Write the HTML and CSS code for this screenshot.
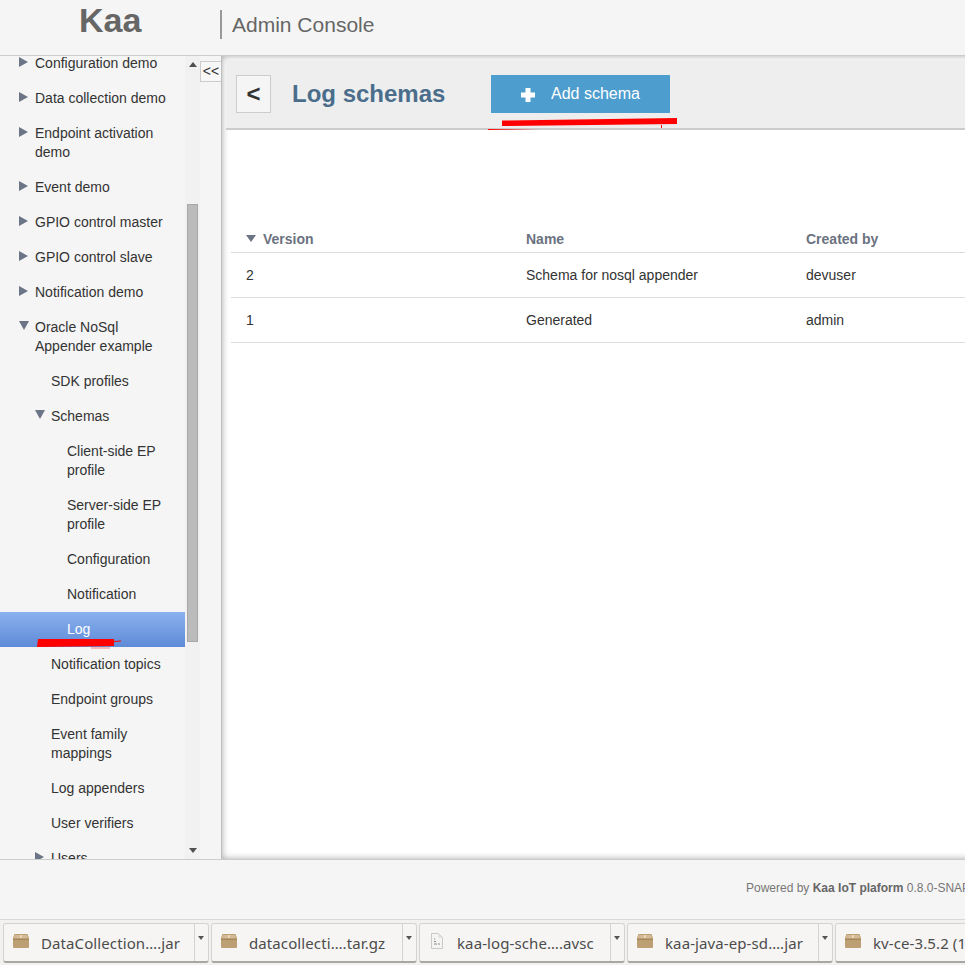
FILE: index.html
```html
<!DOCTYPE html>
<html lang="en">
<head>
    <meta charset="UTF-8">
    <meta name="viewport" content="width=device-width, initial-scale=1.0">
    <title>Kaa Admin Console</title>
    <link rel="stylesheet" href="styles.css">
</head>
<body>

<div class="page">
    <header class="header">
        <div class="logo">Kaa</div>
        <div class="console-title">Admin Console</div>
    </header>

    <div class="middle">
        <nav class="sidebar">
            <div class="tree">
                <div class="node lvl1 closed">Configuration demo</div>
                <div class="node lvl1 closed">Data collection demo</div>
                <div class="node lvl1 closed">Endpoint activation demo</div>
                <div class="node lvl1 closed">Event demo</div>
                <div class="node lvl1 closed">GPIO control master</div>
                <div class="node lvl1 closed">GPIO control slave</div>
                <div class="node lvl1 closed">Notification demo</div>
                <div class="node lvl1 open">Oracle NoSql Appender example</div>
                <div class="node lvl2">SDK profiles</div>
                <div class="node lvl2 open">Schemas</div>
                <div class="node lvl3">Client-side EP profile</div>
                <div class="node lvl3">Server-side EP profile</div>
                <div class="node lvl3">Configuration</div>
                <div class="node lvl3">Notification</div>
                <div class="node lvl3 selected">Log</div>
                <div class="node lvl2">Notification topics</div>
                <div class="node lvl2">Endpoint groups</div>
                <div class="node lvl2">Event family mappings</div>
                <div class="node lvl2">Log appenders</div>
                <div class="node lvl2">User verifiers</div>
                <div class="node lvl2 closed">Users</div>
            </div>
            <div class="scrollbar">
                <div class="scroll-up"></div>
                <div class="scroll-thumb"></div>
                <div class="scroll-down"></div>
            </div>
            <div class="collapse-col">
                <div class="collapse-btn">&lt;&lt;</div>
            </div>
        </nav>

        <main class="content">
            <div class="topbar">
                <div class="back-btn">&lt;</div>
                <h1 class="page-title">Log schemas</h1>
                <div class="add-btn">
                    <svg class="plus" width="14" height="14" viewBox="0 0 14 14"><path d="M4.500 0h5v4.500H14v5H9.500V14h-5V9.500H0v-5h4.500z" fill="#fff"/></svg>
                    <span>Add schema</span>
                </div>
            </div>

            <div class="table">
                <div class="row head">
                    <div class="cell"><span class="sort-arrow"></span>Version</div>
                    <div class="cell">Name</div>
                    <div class="cell">Created by</div>
                </div>
                <div class="row">
                    <div class="cell">2</div>
                    <div class="cell">Schema for nosql appender</div>
                    <div class="cell">devuser</div>
                </div>
                <div class="row">
                    <div class="cell">1</div>
                    <div class="cell">Generated</div>
                    <div class="cell">admin</div>
                </div>
            </div>
        </main>
    </div>

    <footer class="footer">
        <span>Powered by <b>Kaa IoT plaform</b> 0.8.0-SNAPSHOT</span>
    </footer>

    <div class="downloads">
        <div class="dl">
            <div class="dl-main"><svg class="pkg" width="16" height="14" viewBox="0 0 16 14"><use href="#box"/></svg><span>DataCollection….jar</span></div>
            <div class="dl-menu"></div>
        </div>
        <div class="dl">
            <div class="dl-main"><svg class="pkg" width="16" height="14" viewBox="0 0 16 14"><use href="#box"/></svg><span>datacollecti….tar.gz</span></div>
            <div class="dl-menu"></div>
        </div>
        <div class="dl">
            <div class="dl-main">
                <svg class="pkg" width="16" height="16" viewBox="0 0 16 16"><path d="M2.500.5h7l4 4v11h-11z" fill="#f4f4f2" stroke="#c9c9c6"/><path d="M9.500 .5v4h4z" fill="#dcdcd9"/><path d="M5 6h1M5 8.500h2M5 11h3M9 11h2" stroke="#8a8a88"/></svg>
                <span>kaa-log-sche….avsc</span>
            </div>
            <div class="dl-menu"></div>
        </div>
        <div class="dl">
            <div class="dl-main"><svg class="pkg" width="16" height="14" viewBox="0 0 16 14"><use href="#box"/></svg><span>kaa-java-ep-sd….jar</span></div>
            <div class="dl-menu"></div>
        </div>
        <div class="dl">
            <div class="dl-main"><svg class="pkg" width="16" height="14" viewBox="0 0 16 14"><use href="#box"/></svg><span>kv-ce-3.5.2 (1).tar.gz</span></div>
            <div class="dl-menu"></div>
        </div>
    </div>

    <!-- hand drawn red marks on top of the screen -->
    <svg class="marks" width="965" height="965" viewBox="0 0 965 965">
        <defs>
            <linearGradient id="fade">
                <stop offset="0" stop-color="#f00"/>
                <stop offset="1" stop-color="#f00" stop-opacity="0"/>
            </linearGradient>
        </defs>
        <path d="M502 120.500L677 118v6L502 126z" fill="#f00"/>
        <rect x="488" y="129" width="52" height="1" fill="url(#fade)"/>
        <path d="M661 125h1v3h-1z" fill="#f00"/>
        <path d="M38 639h76v2l7 -.500v1l-7 .500v4l-77 1z" fill="#f00"/>
        <path d="M91 647.500h19v1h-19z" fill="#f00" opacity=".5"/>
    </svg>
</div>

<svg class="defs" width="0" height="0">
    <defs>
        <g id="box">
            <path d="M1.500 0h13L16 4v9a1 1 0 0 1-1 1H1a1 1 0 0 1-1-1V4z" fill="#bd9f74"/>
            <path d="M0 5h16v1H0z" fill="#a5875e"/>
            <path d="M2 1h12l1 3H1z" fill="#d3bb97"/>
            <path d="M7 1h2v3H7z" fill="#e6d7bf"/>
        </g>
    </defs>
</svg>

</body>
</html>
```

FILE: styles.css
```css
html, body {
    margin: 0;
    padding: 0;
    overflow: hidden;
}
body {
    font-family: "Liberation Sans", Arial, sans-serif;
    font-size: 14px;
    color: #333;
    background-color: #f5f5f5;
}
.page {
    position: relative;
    display: flex;
    flex-direction: column;
    width: 965px;
    height: 965px;
    overflow: hidden;
}

/* header */
.header {
    display: flex;
    flex: 0 0 56px;
    box-sizing: border-box;
    border-bottom: 1px solid #ccc;
    background-color: #f5f5f5;
    color: #666;
}
.logo {
    width: 220px;
    padding: 0 0 0 79px;
    box-sizing: border-box;
    font-size: 34px;
    font-weight: bold;
    line-height: 40px;
}
.console-title {
    height: 29px;
    margin-top: 10px;
    padding-left: 10px;
    border-left: 2px solid #999;
    font-size: 21px;
    line-height: 30px;
}

/* middle part */
.middle {
    display: flex;
    flex: 1;
    min-height: 0;
}
.sidebar {
    display: flex;
    flex: 0 0 221px;
    overflow: hidden;
}
.tree {
    flex: 0 0 185px;
    height: 100%;
    overflow: hidden;
    background-color: #f5f5f5;
}
.node {
    position: relative;
    padding-top: 8px;
    padding-bottom: 8px;
    padding-right: 8px;
    line-height: 19px;
}
.node:first-child {
    margin-top: -10px;
}
.lvl1 { padding-left: 35px; }
.lvl2 { padding-left: 51px; }
.lvl3 { padding-left: 67px; }
.node.closed::before,
.node.open::before {
    content: "";
    position: absolute;
    top: 11px;
    width: 0;
    height: 0;
}
.lvl1::before { left: 19px; }
.lvl2::before { left: 35px; }
.node.closed::before {
    border-left: 9px solid #6b7585;
    border-top: 5px solid transparent;
    border-bottom: 5px solid transparent;
}
.node.open::before {
    border-top: 9px solid #6b7585;
    border-left: 5px solid transparent;
    border-right: 5px solid transparent;
}
.selected {
    background: linear-gradient(#8ab2f0, #5f8ad6);
    color: #fff;
}

.scrollbar {
    display: flex;
    flex-direction: column;
    align-items: center;
    flex: 0 0 15px;
    background-color: #f1f1f1;
}
.scroll-up {
    width: 0;
    height: 0;
    margin-top: 6px;
    border-bottom: 5px solid #505050;
    border-left: 4px solid transparent;
    border-right: 4px solid transparent;
}
.scroll-thumb {
    box-sizing: border-box;
    width: 11px;
    height: 438px;
    margin-top: 137px;
    background-color: #bbb;
    border: 1px solid #a8a8a8;
}
.scroll-down {
    width: 0;
    height: 0;
    margin-top: 206px;
    border-top: 5px solid #505050;
    border-left: 4px solid transparent;
    border-right: 4px solid transparent;
}
.collapse-col {
    flex: 0 0 21px;
    background-color: #f5f5f5;
}
.collapse-btn {
    box-sizing: border-box;
    width: 22px;
    height: 21px;
    margin-top: 5px;
    border: 1px solid #ccc;
    background-color: #f7f7f7;
    text-align: center;
    font-size: 14px;
    line-height: 19px;
}

/* main content, a bit wider than the window so the shadow only shows on three sides */
.content {
    flex: 1;
    min-width: 0;
    margin-right: -20px;
    padding-top: 4px;
    background-color: #fff;
    border-left: 1px solid #bdbdbd;
    box-shadow: inset 0 0 7px rgba(0, 0, 0, 0.35);
    overflow: hidden;
}
.topbar {
    display: flex;
    align-items: flex-start;
    height: 53px;
    margin-left: 4px;
    padding: 15px 0 0 10px;
    border-bottom: 2px solid #ccc;
    background-color: #eee;
}
.back-btn {
    box-sizing: border-box;
    width: 35px;
    height: 38px;
    border: 1px solid #ccc;
    background-color: #f5f5f5;
    text-align: center;
    font-size: 24px;
    font-weight: bold;
    line-height: 36px;
}
.page-title {
    width: 199px;
    margin: 0 0 0 21px;
    color: #4a6d8c;
    font-size: 24px;
    font-weight: bold;
    line-height: 38px;
}
.add-btn {
    display: flex;
    align-items: center;
    box-sizing: border-box;
    width: 179px;
    height: 38px;
    padding-left: 30px;
    background-color: #4d9dce;
    color: #fff;
    font-size: 16px;
}
.plus {
    margin-right: 16px;
    margin-top: 1px;
}
.table {
    width: 800px;
    margin: 93px 0 0 9px;
}
.row {
    display: grid;
    grid-template-columns: 280px 280px 1fr;
    height: 45px;
    box-sizing: border-box;
    border-bottom: 1px solid #ddd;
    line-height: 44px;
}
.row.head {
    height: 30px;
    line-height: 33px;
    color: #6b7280;
    font-weight: bold;
}
.cell {
    padding-left: 15px;
    white-space: nowrap;
}
.sort-arrow {
    display: inline-block;
    width: 0;
    height: 0;
    margin-right: 7px;
    vertical-align: 2px;
    border-top: 7px solid #6b7585;
    border-left: 5.5px solid transparent;
    border-right: 5.5px solid transparent;
}

/* footer */
.footer {
    flex: 0 0 61px;
    box-sizing: border-box;
    padding-left: 746px;
    border-top: 1px solid #ccc;
    border-bottom: 1px solid #d8d8d8;
    background-color: #f5f5f5;
    color: #777;
    font-size: 12px;
    line-height: 57px;
    white-space: nowrap;
    overflow: hidden;
}
.footer b {
    color: #666;
}

/* browser download bar */
.downloads {
    display: flex;
    flex: 0 0 45px;
    gap: 2px;
    box-sizing: border-box;
    padding: 3px 0 0 3px;
    background-color: #f2f1f0;
    font-family: "Noto Sans", sans-serif;
    font-size: 15px;
    letter-spacing: 0.1px;
    color: #4c4c4c;
    overflow: hidden;
}
.dl {
    display: flex;
    flex: 0 0 206px;
    box-sizing: border-box;
    height: 40px;
    border: 1px solid #d5d3d0;
    border-bottom: 2px solid #a9a7a4;
    border-radius: 3px;
    background-color: #f6f5f4;
}
.dl-main {
    display: flex;
    align-items: center;
    flex: 1;
    min-width: 0;
    padding-left: 9px;
    white-space: nowrap;
    overflow: hidden;
}
.pkg {
    flex: none;
    margin-right: 12px;
    margin-top: -4px;
}
.dl-menu {
    position: relative;
    flex: 0 0 13px;
    border-left: 1px solid #d5d3d0;
}
.dl-menu::after {
    content: "";
    position: absolute;
    top: 12px;
    left: 3px;
    border-top: 4px solid #555;
    border-left: 3.5px solid transparent;
    border-right: 3.5px solid transparent;
}

.marks {
    position: absolute;
    top: 0;
    left: 0;
    pointer-events: none;
}
.defs {
    position: absolute;
}
```
